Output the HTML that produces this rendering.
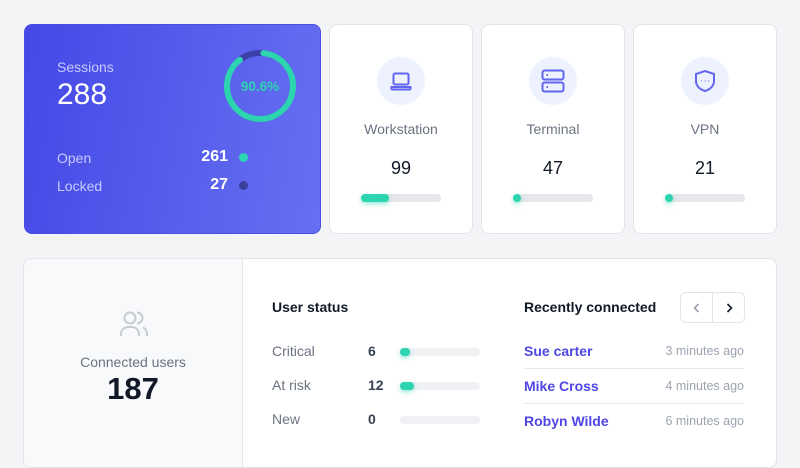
<!DOCTYPE html>
<html><head><style>
*{box-sizing:border-box;margin:0;padding:0}
body{width:800px;height:450px;overflow:hidden;background:#f3f4f6;font-family:"Liberation Sans",sans-serif;position:relative}
.abs{position:absolute}
.card{position:absolute;background:#fff;border:1px solid #e2e4ea;border-radius:8px}
.sess{position:absolute;left:24px;top:24px;width:297px;height:210px;border-radius:8px;background:linear-gradient(100deg,#4548e6,#6670f2);border:1px solid #4a4fe0}
.w{color:#fff}
.lbl{color:#c7cbff;font-size:14px}
.ic{position:absolute;left:47px;top:32px;width:48px;height:48px;border-radius:50%;background:#eef2ff}
.ct{position:absolute;left:0;width:100%;text-align:center}
.bar{position:absolute;height:8px;border-radius:4px;background:#e5e7eb}
.fill{position:absolute;left:0;top:0;height:8px;border-radius:4px;background:#2dd4b0;box-shadow:0 2px 5px rgba(45,212,176,.5)}
.sbar{position:absolute;left:400px;width:80px;height:8px;border-radius:4px;background:#f0f1f5}
.row{position:absolute;left:524px;width:220px;font-size:14px}
.row b{color:#4f46e5;font-weight:bold}
.row span{position:absolute;right:0;color:#9ca3af;font-size:12.5px;top:1px}
</style></head><body>
<div class="sess">
 <div class="abs lbl" style="left:32px;top:34px">Sessions</div>
 <div class="abs w" style="left:32px;top:53px;font-size:30px">288</div>
 <svg class="abs" style="left:198px;top:24px" width="74" height="74" viewBox="0 0 74 74">
  <circle cx="37" cy="37" r="33" fill="none" stroke="#3d3fa8" stroke-width="6"/>
  <circle cx="37" cy="37" r="33" fill="none" stroke="#2dd4b0" stroke-width="6" stroke-dasharray="182 300" transform="rotate(-84 37 37)" stroke-linecap="round"/>
  <text x="37" y="42" text-anchor="middle" fill="#2dd4b0" font-size="13.5" font-weight="bold" font-family="Liberation Sans">90.6%</text>
 </svg>
 <div class="abs lbl" style="left:32px;top:125px">Open</div>
 <div class="abs w" style="left:150px;top:123px;width:53px;text-align:right;font-weight:bold;font-size:16px">261</div>
 <div class="abs" style="left:214px;top:128px;width:9px;height:9px;border-radius:50%;background:#2dd4b0"></div>
 <div class="abs lbl" style="left:32px;top:153px">Locked</div>
 <div class="abs w" style="left:150px;top:151px;width:53px;text-align:right;font-weight:bold;font-size:16px">27</div>
 <div class="abs" style="left:214px;top:156px;width:9px;height:9px;border-radius:50%;background:#3a3f9c"></div>
</div>

<div class="card" style="left:329px;top:24px;width:144px;height:210px">
 <div class="ic"><svg width="48" height="48" viewBox="0 0 48 48" fill="none" stroke="#6366f1" stroke-width="2"><rect x="16.5" y="16.5" width="15" height="11" rx="1.5"/><path d="M14.5 30h19v1.5a1 1 0 0 1-1 1h-17a1 1 0 0 1-1-1z"/></svg></div>
 <div class="ct" style="top:96px;color:#6b7280;font-size:14px">Workstation</div>
 <div class="ct" style="top:133px;color:#111827;font-size:18px">99</div>
 <div class="bar" style="left:31px;top:169px;width:80px"><div class="fill" style="width:28px"></div></div>
</div>
<div class="card" style="left:481px;top:24px;width:144px;height:210px">
 <div class="ic"><svg width="48" height="48" viewBox="0 0 48 48" fill="none" stroke="#6366f1" stroke-width="2"><rect x="13.5" y="13.5" width="21" height="9" rx="2"/><rect x="13.5" y="25.5" width="21" height="9" rx="2"/><path d="M17.5 18h1.5M17.5 30h1.5"/></svg></div>
 <div class="ct" style="top:96px;color:#6b7280;font-size:14px">Terminal</div>
 <div class="ct" style="top:133px;color:#111827;font-size:18px">47</div>
 <div class="bar" style="left:31px;top:169px;width:80px"><div class="fill" style="width:8px"></div></div>
</div>
<div class="card" style="left:633px;top:24px;width:144px;height:210px">
 <div class="ic"><svg width="48" height="48" viewBox="0 0 48 48" fill="none" stroke="#6366f1" stroke-width="2"><path d="M24 14l9 3v7c0 5-4 8.5-9 10-5-1.5-9-5-9-10v-7z"/><path d="M20.5 24h.5M23.8 24h.5M27 24h.5" stroke-width="2"/></svg></div>
 <div class="ct" style="top:96px;color:#6b7280;font-size:14px">VPN</div>
 <div class="ct" style="top:133px;color:#111827;font-size:18px">21</div>
 <div class="bar" style="left:31px;top:169px;width:80px"><div class="fill" style="width:8px"></div></div>
</div>

<div class="card" style="left:23px;top:258px;width:754px;height:210px;overflow:hidden">
 <div class="abs" style="left:0;top:0;width:219px;height:210px;background:#f8f9fb;border-right:1px solid #e2e4ea">
  <svg class="abs" style="left:94px;top:50px" width="32" height="30" viewBox="0 0 32 30" fill="none" stroke="#c8cbd3" stroke-width="2"><circle cx="12" cy="9" r="5.5"/><path d="M3 27v-2a7 7 0 0 1 7-7h4a7 7 0 0 1 7 7v2"/><path d="M19 3.5a5.5 5.5 0 0 1 0 11"/><path d="M25 18.5a7 7 0 0 1 4 6.5v2"/></svg>
  <div class="ct" style="top:95px;color:#6b7280;font-size:14px">Connected users</div>
  <div class="ct" style="top:112px;color:#111827;font-size:31px;font-weight:bold">187</div>
 </div>
 <div class="abs" style="left:248px;top:40px;font-size:14px;font-weight:bold;color:#111827">User status</div>
 <div class="abs" style="left:248px;top:84px;font-size:14px;color:#6b7280">Critical</div>
 <div class="abs" style="left:344px;top:84px;font-size:14px;font-weight:bold;color:#374151">6</div>
 <div class="sbar" style="left:376px;top:89px"><div class="fill" style="width:10px"></div></div>
 <div class="abs" style="left:248px;top:118px;font-size:14px;color:#6b7280">At risk</div>
 <div class="abs" style="left:344px;top:118px;font-size:14px;font-weight:bold;color:#374151">12</div>
 <div class="sbar" style="left:376px;top:123px"><div class="fill" style="width:14px"></div></div>
 <div class="abs" style="left:248px;top:152px;font-size:14px;color:#6b7280">New</div>
 <div class="abs" style="left:344px;top:152px;font-size:14px;font-weight:bold;color:#374151">0</div>
 <div class="sbar" style="left:376px;top:157px"></div>
 <div class="abs" style="left:500px;top:40px;font-size:14px;font-weight:bold;color:#111827">Recently connected</div>
 <div class="abs" style="left:656px;top:33px;width:65px;height:31px;border:1px solid #e2e4ea;border-radius:6px">
  <div class="abs" style="left:31px;top:0;width:1px;height:29px;background:#e2e4ea"></div>
  <svg class="abs" style="left:10px;top:9px" width="12" height="12" viewBox="0 0 12 12" fill="none" stroke="#9ca3af" stroke-width="1.6"><path d="M7.5 2L3.5 6l4 4"/></svg>
  <svg class="abs" style="left:42px;top:9px" width="12" height="12" viewBox="0 0 12 12" fill="none" stroke="#111827" stroke-width="1.6"><path d="M4.5 2l4 4-4 4"/></svg>
 </div>
</div>
<div class="row" style="top:343px"><b>Sue carter</b><span>3 minutes ago</span></div>
<div class="abs" style="left:524px;top:368px;width:220px;height:1px;background:#e5e7eb"></div>
<div class="row" style="top:378px"><b>Mike Cross</b><span>4 minutes ago</span></div>
<div class="abs" style="left:524px;top:403px;width:220px;height:1px;background:#e5e7eb"></div>
<div class="row" style="top:413px"><b>Robyn Wilde</b><span>6 minutes ago</span></div>
</body></html>
